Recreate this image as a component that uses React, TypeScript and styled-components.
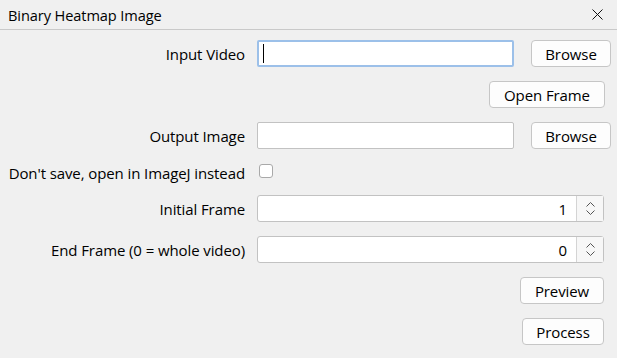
import { FC } from 'react';
import styled, { createGlobalStyle } from 'styled-components';

const GlobalStyle = createGlobalStyle`
    html, body {
        margin: 0;
        padding: 0;
        background: #f0f0f0;
    }
    body {
        font-family: "Open Sans", "Noto Sans", sans-serif;
        font-size: 15px;
        color: #000;
    }
`;

const Window = styled.div`
    width: 617px;
    height: 358px;
    background: #f0f0f0;
    display: flex;
    flex-direction: column;
    overflow: hidden;
`;

const TitleBar = styled.div`
    height: 29px;
    border-bottom: 1px solid #c9c9c9;
    display: flex;
    align-items: center;
    justify-content: space-between;
    padding: 0 14px 0 8px;
    font-size: 14.6px;
    letter-spacing: -0.1px;
`;

const CloseIcon = styled.svg`
    width: 11px;
    height: 11px;
    margin-top: -1px;
`;

const Form = styled.div`
    display: flex;
    flex-direction: column;
    gap: 14px;
    padding-top: 10px;
`;

const Row = styled.div<{ $short?: boolean }>`
    display: flex;
    align-items: center;
    height: ${p => (p.$short ? '18px' : '27px')};
`;

const Label = styled.div`
    width: 245px;
    text-align: right;
    white-space: nowrap;
    margin-right: 12px;
    letter-spacing: -0.1px;
    padding-top: 1px;
`;

const Field = styled.div<{ $focused?: boolean }>`
    width: 257px;
    height: 27px;
    box-sizing: border-box;
    background: #fff;
    border: ${p => (p.$focused ? '2px solid #9cc0e9' : '1px solid #c2c2c2')};
    border-radius: 2px;
    display: flex;
    align-items: center;
    padding-left: 4px;
`;

const Caret = styled.div`
    width: 1px;
    height: 19px;
    background: #000;
`;

const Button = styled.button<{ $w: number; $ml?: number }>`
    width: ${p => p.$w}px;
    height: 27px;
    margin-left: ${p => p.$ml ?? 0}px;
    box-sizing: border-box;
    background: #fdfdfd;
    border: 1px solid #c6c6c6;
    border-radius: 4px;
    font-family: inherit;
    font-size: 15px;
    color: #000;
    padding: 1px 0 0;
    letter-spacing: -0.1px;
`;

const Checkbox = styled.div`
    width: 14px;
    height: 14px;
    box-sizing: border-box;
    margin-left: 2px;
    margin-top: -2px;
    background: #fff;
    border: 1px solid #a9a9a9;
    border-radius: 3px;
`;

const Spin = styled.div`
    width: 347px;
    height: 27px;
    box-sizing: border-box;
    background: #fff;
    border: 1px solid #c2c2c2;
    border-radius: 3px;
    display: flex;
`;

const SpinValue = styled.div`
    flex: 1;
    text-align: right;
    padding-right: 9px;
    line-height: 26px;
`;

const SpinArrows = styled.div`
    width: 26px;
    border-left: 1px solid #d4d4d4;
    background: #f7f7f7;
    display: flex;
    flex-direction: column;
    align-items: center;
    justify-content: center;
    gap: 3px;
`;

const Chevron = styled.svg`
    width: 9px;
    height: 5px;
`;

const RightRow = styled(Row)<{ $pr: number }>`
    justify-content: flex-end;
    padding-right: ${p => p.$pr}px;
`;

const SpinBox: FC<{ value: number }> = ({ value }) => (
    <Spin>
        <SpinValue>{value}</SpinValue>
        <SpinArrows>
            <Chevron viewBox="0 0 9 5">
                <path d="M0.5 4.5 L4.5 0.5 L8.5 4.5" fill="none" stroke="#555" strokeWidth="1" />
            </Chevron>
            <Chevron viewBox="0 0 9 5">
                <path d="M0.5 0.5 L4.5 4.5 L8.5 0.5" fill="none" stroke="#555" strokeWidth="1" />
            </Chevron>
        </SpinArrows>
    </Spin>
);

const App: FC = () => {
    return (
        <Window>
            <GlobalStyle />
            <TitleBar>
                <span>Binary Heatmap Image</span>
                <CloseIcon viewBox="0 0 11 11">
                    <path d="M0.5 0.5 L10.5 10.5 M10.5 0.5 L0.5 10.5" stroke="#111" strokeWidth="1" />
                </CloseIcon>
            </TitleBar>
            <Form>
                <Row>
                    <Label>Input Video</Label>
                    <Field $focused>
                        <Caret />
                    </Field>
                    <Button $w={80} $ml={17}>Browse</Button>
                </Row>
                <RightRow $pr={12}>
                    <Button $w={116}>Open Frame</Button>
                </RightRow>
                <Row>
                    <Label>Output Image</Label>
                    <Field />
                    <Button $w={80} $ml={17}>Browse</Button>
                </Row>
                <Row $short>
                    <Label>Don't save, open in ImageJ instead</Label>
                    <Checkbox />
                </Row>
                <Row>
                    <Label>Initial Frame</Label>
                    <SpinBox value={1} />
                </Row>
                <Row>
                    <Label>End Frame (0 = whole video)</Label>
                    <SpinBox value={0} />
                </Row>
                <RightRow $pr={13}>
                    <Button $w={84}>Preview</Button>
                </RightRow>
                <RightRow $pr={13}>
                    <Button $w={82}>Process</Button>
                </RightRow>
            </Form>
        </Window>
    );
};

export default App;
